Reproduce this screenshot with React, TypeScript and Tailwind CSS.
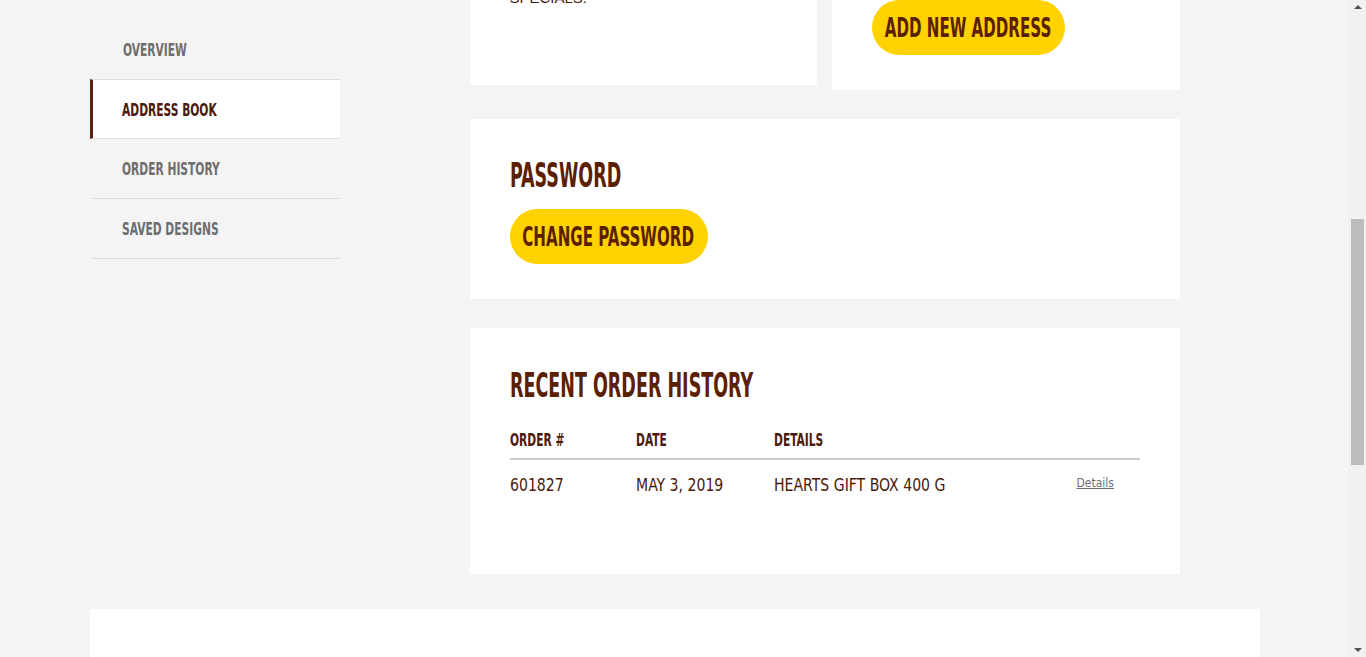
const font = { fontFamily: "'DejaVu Sans Condensed', 'DejaVu Sans', sans-serif" };

const navItems = [
  { label: "OVERVIEW", active: false },
  { label: "ADDRESS BOOK", active: true },
  { label: "ORDER HISTORY", active: false },
  { label: "SAVED DESIGNS", active: false },
];

// DIN-style condensed face is not installed, so squeeze the text horizontally
function Narrow({ children, className = "" }: { children: React.ReactNode; className?: string }) {
  return <span className={"inline-block whitespace-nowrap origin-left scale-x-[0.66] " + className}>{children}</span>;
}

function Sidebar() {
  return (
    <nav className="w-[250px] shrink-0 pt-[19px]">
      {navItems.map((item, i) => (
        <div
          key={item.label}
          className={
            item.active
              ? "h-[60px] flex items-center pl-[29px] bg-white border-l-[3px] border-[#5e1f0f] border-y border-y-[#dddddd] text-[#4a1a0a]"
              : i === 0
              ? "h-[60px] flex items-center pl-8 ml-px text-[#6e6e6e]"
              : "h-[60px] flex items-center pl-[31px] ml-px border-b border-[#dddddd] text-[#6e6e6e]"
          }
        >
          <Narrow className="text-[18px] font-bold">{item.label}</Narrow>
        </div>
      ))}
    </nav>
  );
}

function Button({ children, w }: { children: React.ReactNode; w: string }) {
  return (
    <button className={"h-[55px] flex items-center justify-center rounded-full bg-[#ffd200] text-[#5a2000] text-[26px] font-bold leading-none " + w}>
      <span className="inline-block whitespace-nowrap scale-x-[0.645]">{children}</span>
    </button>
  );
}

function OrderTable() {
  return (
    <div className="mt-[14px]">
      <div className="grid grid-cols-[126px_138px_1fr_63px] h-[42px] items-center border-b-2 border-[#cccccc] text-[#4a1a0a] text-[18px] font-bold pt-[3px]">
        <Narrow>ORDER #</Narrow>
        <Narrow>DATE</Narrow>
        <Narrow>DETAILS</Narrow>
        <span />
      </div>
      <div className="grid grid-cols-[126px_138px_1fr_63px] h-[50px] items-center text-[#4a1a0a] text-[17px] pt-px">
        <span className="inline-block whitespace-nowrap origin-left scale-x-[0.92]">601827</span>
        <span className="inline-block whitespace-nowrap origin-left scale-x-[0.92]">MAY 3, 2019</span>
        <span className="inline-block whitespace-nowrap origin-left scale-x-[0.92]">HEARTS GIFT BOX 400 G</span>
        <a href="#" className="text-[12px] text-[#6e6e6e] underline -mt-[6px]">
          Details
        </a>
      </div>
    </div>
  );
}

export default function App() {
  return (
    <div className="flex h-[657px] overflow-hidden" style={font}>
      <div className="flex-1 bg-[#f4f4f4] overflow-hidden">
        <div className="w-[1170px] mx-auto">
          <div className="flex">
            <Sidebar />
            <main className="w-[710px] ml-[130px] -mt-[115px]">
              <div className="flex items-start gap-[15px]">
                <div
                  className="w-[347px] h-[200px] bg-white flex flex-col justify-end px-10 pb-[78px] text-[#4a1a0a] text-[15px] leading-[18px]"
                  style={{ fontFamily: "'Liberation Sans', Arial, sans-serif" }}
                >
                  <p>SPECIALS.</p>
                </div>
                <div className="w-[348px] h-[205px] bg-white flex flex-col justify-end items-start px-10 pb-[35px]">
                  <Button w="w-[193px]">ADD NEW ADDRESS</Button>
                </div>
              </div>
              <section className="mt-[29px] h-[180px] bg-white px-10 pt-[39px]">
                <h2 className="text-[33px] leading-[36px] font-bold text-[#5a2000]">
                  <span className="inline-block whitespace-nowrap origin-left scale-x-[0.59]">PASSWORD</span>
                </h2>
                <div className="mt-[15px]">
                  <Button w="w-[198px]">CHANGE PASSWORD</Button>
                </div>
              </section>
              <section className="mt-[29px] h-[246px] bg-white px-10 pt-[40px]">
                <h2 className="text-[33px] leading-[36px] font-bold text-[#5a2000]">
                  <span className="inline-block whitespace-nowrap origin-left scale-x-[0.59]">RECENT ORDER HISTORY</span>
                </h2>
                <OrderTable />
              </section>
            </main>
          </div>
          <div className="mt-[35px] h-[100px] bg-white" />
        </div>
      </div>
      <div className="relative w-[17px] bg-[#f1f1f1] flex flex-col items-center justify-between py-[5px]">
        <div className="w-0 h-0 border-x-[4px] border-x-transparent border-b-[4px] border-b-[#505050]" />
        <div className="absolute top-[219px] left-[2px] w-[13px] h-[246px] bg-[#bcbcbc]" />
        <div className="w-0 h-0 border-x-[4px] border-x-transparent border-t-[4px] border-t-[#505050]" />
      </div>
    </div>
  );
}
